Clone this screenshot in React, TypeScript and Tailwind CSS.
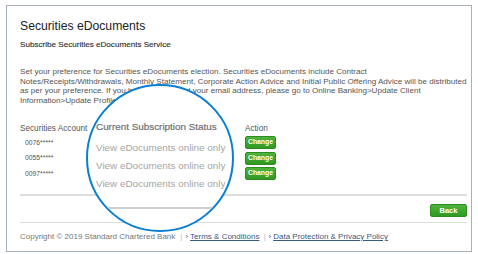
import React from 'react';

const accounts = ['0076*****', '0055*****', '0097*****'];

function GreenButton({ label, className }: { label: string; className: string }) {
  return (
    <button
      type="button"
      className={`flex items-center justify-center rounded-[2px] border border-[#2f8a22] bg-gradient-to-b from-[#4fb33b] to-[#2f9a22] font-bold text-white ${className}`}
    >
      {label}
    </button>
  );
}

export default function App() {
  return (
    <div
      className="relative h-[254px] w-[478px] bg-white pl-[6px] pt-[5px]"
      style={{ fontFamily: '"Liberation Sans", Arial, sans-serif' }}
    >
      <div className="flex h-[247px] w-[466px] flex-col border border-[#a9b1bf] pl-[13px] pr-[4px]">
        <h1 className="mt-[11px] h-[18px] text-[12.2px] leading-[18px] text-[#222]">Securities eDocuments</h1>
        <p className="mt-[5px] text-[8.1px] leading-[10px] text-[#333] [-webkit-text-stroke:0.15px_#333]">
          Subscribe Securities eDocuments Service
        </p>

        <div className="mt-[17px] text-[8.1px] leading-[9.5px] text-[#555]">
          <div>Set your preference for Securities eDocuments election. Securities eDocuments include Contract</div>
          <div className="whitespace-nowrap">
            Notes/Receipts/Withdrawals, Monthly Statement, Corporate Action Advice and Initial Public Offering Advice will be distributed
          </div>
          <div>as per your preference. If you have not updated your email address, please go to Online Banking&gt;Update Client</div>
          <div>Information&gt;Update Profile.</div>
        </div>

        <div className="mt-[19px] flex text-[#555]">
          <div className="w-[90px]">
            <div className="h-[10px] text-[8.2px] leading-[10px]">Securities Account</div>
            <div className="mt-[1px] flex flex-col pl-[5px]">
              {accounts.map((a) => (
                <div key={a} className="h-[15.3px] text-[6.8px] leading-[15.3px]">
                  {a}
                </div>
              ))}
            </div>
          </div>
          <div className="w-[135px] text-[8.2px]">Current Subscription Status</div>
          <div className="flex flex-col">
            <div className="h-[10px] text-[8.2px] leading-[10px]">Action</div>
            <div className="mt-[2px] flex flex-col gap-[2.5px]">
              {accounts.map((a) => (
                <GreenButton key={a} label="Change" className="h-[13px] w-[31px] text-[6.8px]" />
              ))}
            </div>
          </div>
        </div>

        <div className="mt-[13.5px] h-[1.5px] bg-[#dedede]" />
        <div className="mt-[8px] flex justify-end">
          <GreenButton label="Back" className="h-[13.5px] w-[37px] text-[7.5px]" />
        </div>
        <div className="mt-[4.5px] h-[1.5px] bg-[#dedede]" />

        <div className="mt-[8.5px] flex items-center text-[8px] leading-[10px] text-[#777]">
          <span>Copyright © 2019 Standard Chartered Bank</span>
          <span className="ml-[5px] text-[#bbb]">|</span>
          <span className="ml-[3px] text-[#3b5a7e]">›</span>
          <span className="ml-[2px] text-[#3b5a7e] underline">Terms &amp; Conditions</span>
          <span className="ml-[4px] text-[#bbb]">|</span>
          <span className="ml-[3px] text-[#3b5a7e]">›</span>
          <span className="ml-[2px] text-[#3b5a7e] underline">Data Protection &amp; Privacy Policy</span>
        </div>
      </div>

      {/* magnifier overlay */}
      <div className="absolute left-[86px] top-[84px] flex h-[148px] w-[148px] flex-col overflow-hidden rounded-full border-[2.5px] border-[#0a7fd4] bg-white">
        <div className="flex flex-col pl-[8px] pt-[34px] text-[9.9px]">
          <div className="h-[14px] leading-[14px] text-[#6f6f6f] [-webkit-text-stroke:0.2px_#6f6f6f]">
            Current Subscription Status
          </div>
          <div className="mt-[4.5px] flex flex-col">
            {accounts.map((a) => (
              <div key={a} className="h-[18.4px] leading-[18.4px] text-[#a5a5a5]">
                View eDocuments online only
              </div>
            ))}
          </div>
        </div>
        <div className="mt-[13px] h-[2px] w-full shrink-0 bg-[#cfcfcf]" />
      </div>
    </div>
  );
}
